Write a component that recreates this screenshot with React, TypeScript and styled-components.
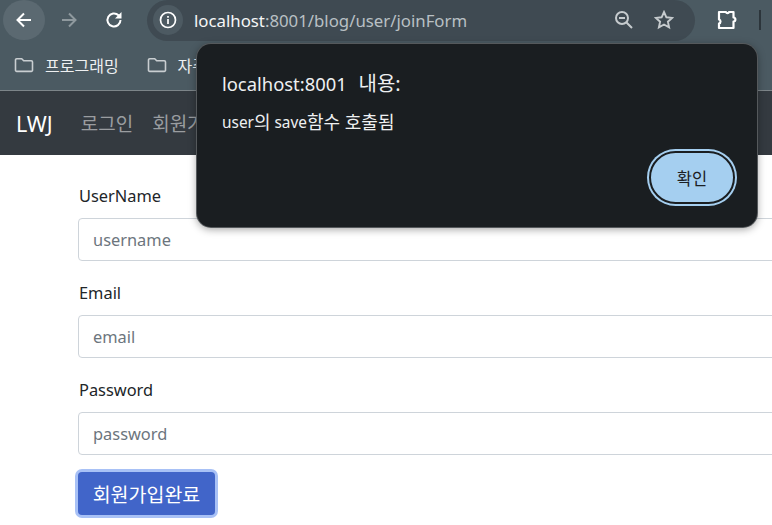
import React from "react";
import styled, { createGlobalStyle } from "styled-components";

const Global = createGlobalStyle`
  html, body { margin: 0; padding: 0; background: #fff; overflow: hidden; }
  body { font-family: "Noto Sans", "Noto Sans CJK KR", sans-serif; width: 772px; height: 525px; }
  * { box-sizing: border-box; }
`;

const Page = styled.div`
  position: relative;
  width: 772px;
  height: 525px;
  overflow: hidden;
  display: flex;
  flex-direction: column;
`;

const Toolbar = styled.div`
  height: 41px;
  background: #4b5a62;
  display: flex;
  align-items: flex-start;
  flex: none;
`;

const NavRound = styled.div<{ $active?: boolean }>`
  width: 42px;
  height: 40px;
  flex: none;
  display: flex;
  align-items: center;
  justify-content: center;
  background: ${(p) => (p.$active ? "#5b6971" : "transparent")};
  border-radius: 50%;
`;

const NavCluster = styled.div`
  display: flex;
  padding-left: 3px;
  gap: 3px;
  width: 147px;
  flex: none;
`;

const Omnibox = styled.div`
  width: 548px;
  height: 41px;
  background: #3f4a52;
  border-radius: 21px;
  display: flex;
  align-items: center;
  padding: 0 21px 1px 6px;
  flex: none;
`;

const InfoChip = styled.div`
  width: 30px;
  height: 30px;
  border-radius: 50%;
  background: #4d5a62;
  display: flex;
  align-items: center;
  justify-content: center;
  flex: none;
`;

const Url = styled.div`
  margin-left: 11px;
  font-size: 16.8px;
  color: #b9c0c4;
  flex: 1;
  white-space: nowrap;
  & b { font-weight: 400; color: #f6f7f7; }
`;

const OmniIcons = styled.div`
  display: flex;
  align-items: center;
  gap: 20px;
`;

const ExtSlot = styled.div`
  margin-left: 21px;
  display: flex;
  align-items: center;
  height: 40px;
  gap: 21px;
`;

const Divider = styled.div`
  width: 2px;
  height: 20px;
  background: #2c353b;
`;

const Bookmarks = styled.div`
  height: 50px;
  background: #4b5a62;
  display: flex;
  align-items: center;
  padding: 0 0 2px 14px;
  gap: 28px;
  flex: none;
  border-bottom: 1px solid #7d8589;
`;

const Bookmark = styled.div`
  display: flex;
  align-items: center;
  gap: 11px;
  font-size: 16px;
  color: #eef0f1;
  white-space: nowrap;
`;

const Nav = styled.nav`
  height: 64px;
  background: #343a40;
  display: flex;
  align-items: center;
  padding-left: 16px;
  flex: none;
`;

const Brand = styled.div`
  font-size: 21.5px;
  color: #fff;
  margin-right: 28px;
`;

const NavLink = styled.div`
  font-size: 19px;
  color: #9a9da0;
  margin-right: 19px;
  white-space: nowrap;
`;

const Form = styled.form`
  padding: 29px 0 0 78px;
  width: 900px;
  display: flex;
  flex-direction: column;
  align-items: flex-start;
`;

const Group = styled.div`
  width: 100%;
  margin-bottom: 20px;
`;

const Label = styled.div`
  font-size: 16.4px;
  line-height: 24px;
  margin-bottom: 10px;
  padding-left: 1px;
  color: #212529;
`;

const Input = styled.div`
  height: 43px;
  border: 1px solid #ced4da;
  border-radius: 4px;
  padding-left: 14px;
  display: flex;
  align-items: center;
  font-size: 16.4px;
  color: #6c757d;
  background: #fff;
`;

const Submit = styled.div`
  margin-top: -3px;
  width: 137px;
  height: 43px;
  background: #4165c9;
  color: #fff;
  border-radius: 4px;
  box-shadow: 0 0 0 3px #a8c1f6;
  display: flex;
  align-items: center;
  justify-content: center;
  font-size: 19.5px;
`;

const Dialog = styled.div`
  position: absolute;
  left: 197px;
  top: 44px;
  width: 560px;
  height: 183px;
  background: #1a1e21;
  border-radius: 14px;
  box-shadow: 0 0 0 1px #55595c, 0 2px 8px rgba(0, 0, 0, 0.4);
  padding: 27px 22px 0 25px;
  display: flex;
  flex-direction: column;
`;

const DialogTitle = styled.div`
  font-size: 18.4px;
  line-height: 26px;
  color: #eef0f1;
  white-space: nowrap;
  word-spacing: 7px;
`;

const TitleKo = styled.span`
  font-size: 20px;
`;

const DialogText = styled.div`
  margin-top: 15px;
  font-size: 15.4px;
  line-height: 20px;
  color: #eef0f1;
  white-space: nowrap;
`;

const TextKo = styled.span`
  font-size: 18px;
  vertical-align: -1px;
`;

const DialogActions = styled.div`
  display: flex;
  justify-content: flex-end;
  margin-top: 18px;
`;

const Confirm = styled.div`
  width: 86px;
  height: 53px;
  border-radius: 27px;
  background: #a5cff0;
  border: 2px solid #1a1e21;
  box-shadow: 0 0 0 2px #a5cff0;
  color: #1c2024;
  font-size: 16.5px;
  display: flex;
  align-items: center;
  justify-content: center;
`;

const FolderIcon = () => (
  <svg width="20" height="16" viewBox="0 0 20 16" fill="none" stroke="#c9ced1" strokeWidth="1.6">
    <path d="M1.5 3a1.2 1.2 0 0 1 1.2-1.2h5l2 2h7.6a1.2 1.2 0 0 1 1.2 1.2v8.2a1.2 1.2 0 0 1-1.2 1.2H2.7a1.2 1.2 0 0 1-1.2-1.2z" />
  </svg>
);

export default function App() {
  return (
    <Page>
      <Global />
      <Toolbar>
        <NavCluster>
          <NavRound $active>
            <svg width="18" height="18" viewBox="0 0 18 18" fill="none" stroke="#fff" strokeWidth="2">
              <path d="M16 9H3M9 2.5 2.5 9 9 15.5" />
            </svg>
          </NavRound>
          <NavRound>
            <svg width="18" height="18" viewBox="0 0 18 18" fill="none" stroke="#8f999e" strokeWidth="2">
              <path d="M2 9h13M9 2.5 15.5 9 9 15.5" />
            </svg>
          </NavRound>
          <NavRound>
            <svg width="18" height="18" viewBox="0 0 18 18" fill="none" stroke="#fff" strokeWidth="2">
              <path d="M15.5 9a6.5 6.5 0 1 1-2-4.7L15.5 6" />
              <path d="M16.5 1v6.5H10z" fill="#fff" stroke="none" />
            </svg>
          </NavRound>
        </NavCluster>
        <Omnibox>
          <InfoChip>
            <svg width="18" height="18" viewBox="0 0 18 18" fill="none" stroke="#fff" strokeWidth="1.7">
              <circle cx="9" cy="9" r="7.5" />
              <path d="M9 8v5M9 5v1.7" />
            </svg>
          </InfoChip>
          <Url>
            <b>localhost</b>:8001/blog/user/joinForm
          </Url>
          <OmniIcons>
            <svg width="20" height="20" viewBox="0 0 20 20" fill="none" stroke="#c6cbce" strokeWidth="2">
              <circle cx="8" cy="8" r="6" />
              <path d="M5 8h6M12.5 12.5 18 18" />
            </svg>
            <svg width="20" height="20" viewBox="0 0 20 20" fill="none" stroke="#c6cbce" strokeWidth="1.9">
              <path d="m10 2 2.4 5.3 5.8.6-4.3 3.8 1.2 5.7-5.1-2.9-5.1 2.9 1.2-5.7L1.8 7.9l5.800-.6z" />
            </svg>
          </OmniIcons>
        </Omnibox>
        <ExtSlot>
          <svg width="22" height="22" viewBox="0 0 22 22" fill="none" stroke="#fff" strokeWidth="2.2" strokeLinejoin="round">
            <path d="M3 3h7c.4 1.500 2.600 1.500 3 0h4.500v5.500c2.500.3 2.500 3.700 0 4V19H3v-4.500c2-.5 2-3.500 0-4z" />
          </svg>
          <Divider />
        </ExtSlot>
      </Toolbar>
      <Bookmarks>
        <Bookmark>
          <FolderIcon />
          프로그래밍
        </Bookmark>
        <Bookmark>
          <FolderIcon />
          자주
        </Bookmark>
      </Bookmarks>
      <Nav>
        <Brand>LWJ</Brand>
        <NavLink>로그인</NavLink>
        <NavLink>회원가입</NavLink>
      </Nav>
      <Form>
        <Group>
          <Label>UserName</Label>
          <Input>username</Input>
        </Group>
        <Group>
          <Label>Email</Label>
          <Input>email</Input>
        </Group>
        <Group>
          <Label>Password</Label>
          <Input>password</Input>
        </Group>
        <Submit>회원가입완료</Submit>
      </Form>
      <Dialog>
        <DialogTitle>
          localhost:8001 <TitleKo>내용:</TitleKo>
        </DialogTitle>
        <DialogText>
          user<TextKo>의</TextKo> save<TextKo>함수 호출됨</TextKo>
        </DialogText>
        <DialogActions>
          <Confirm>확인</Confirm>
        </DialogActions>
      </Dialog>
    </Page>
  );
}
